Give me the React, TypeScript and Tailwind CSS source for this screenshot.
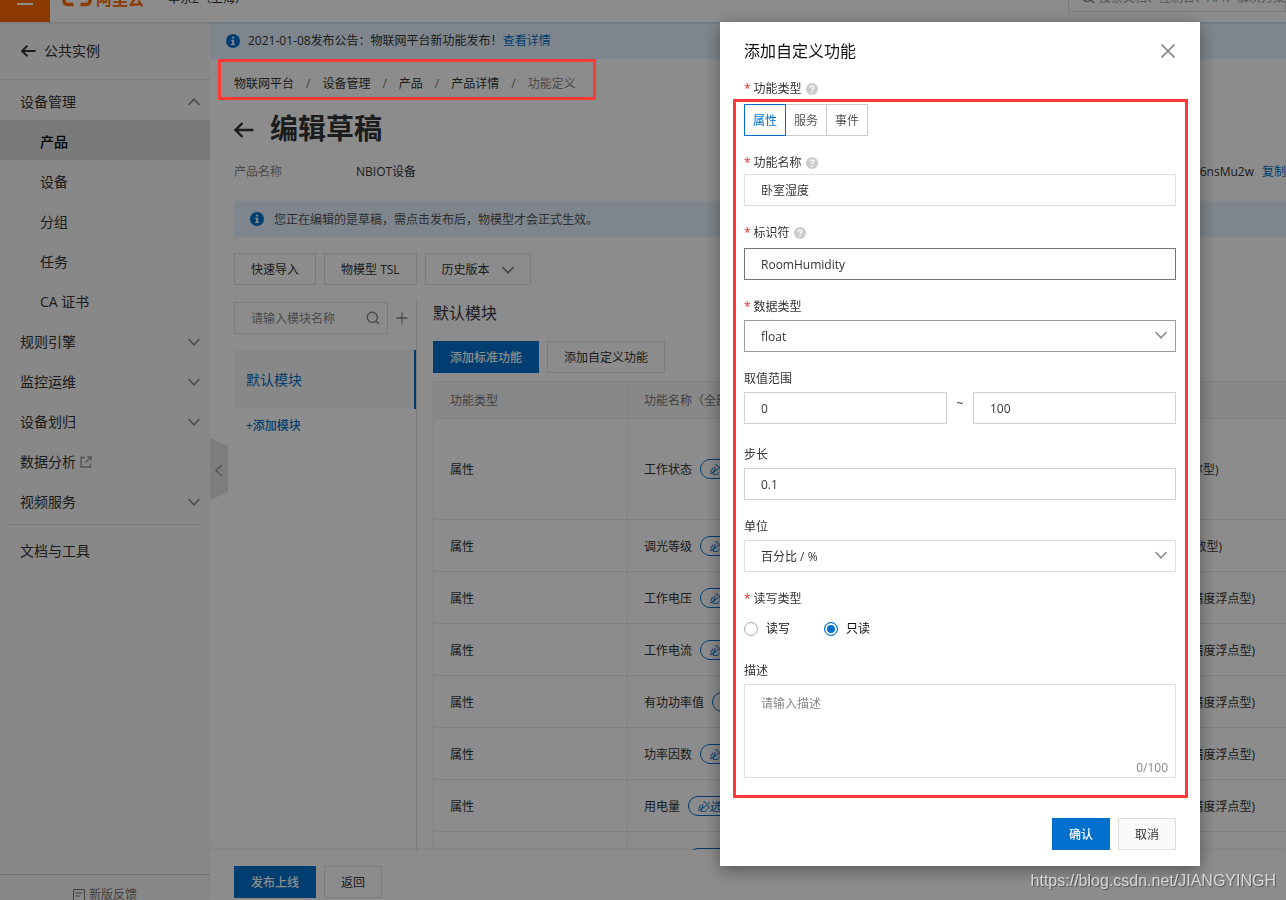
import React, { useState } from 'react';
import clsx from 'clsx';

type IconProps = { className?: string };

const ChevronIcon = ({ className }: IconProps) => (
  <svg viewBox="0 0 12 12" className={clsx('h-3 w-3', className)} fill="none" stroke="currentColor" strokeWidth="1.5">
    <path d="M0.5 3 L6 8.8 L11.5 3" />
  </svg>
);

const ArrowLeftIcon = ({ className }: IconProps) => (
  <svg viewBox="0 0 20 16" className={className} fill="none" stroke="currentColor" strokeWidth="2.4">
    <path d="M19.5 8 H1.5 M8.5 1 L1.5 8 L8.5 15" />
  </svg>
);

const InfoIcon = () => (
  <svg viewBox="0 0 14 14" className="h-[14px] w-[14px] shrink-0">
    <circle cx="7" cy="7" r="7" fill="#0070cc" />
    <path d="M6.1 2.8h2v1.8h-2z M5.2 5.8h2.9v4.1h0.9v1.1H5.1V9.9h1.1V6.9h-1z" fill="#fff" />
  </svg>
);

const HelpIcon = () => (
  <svg viewBox="0 0 12 12" className="ml-1 h-3 w-3">
    <circle cx="6" cy="6" r="6" fill="#ccc" />
    <path d="M4.2 4.7 C4.2 2.3 7.8 2.4 7.8 4.6 C7.8 5.9 6 5.8 6 7.3" fill="none" stroke="#fff" strokeWidth="1.3" />
    <circle cx="6" cy="9.1" r="0.8" fill="#fff" />
  </svg>
);

const SearchIcon = ({ className }: IconProps) => (
  <svg viewBox="0 0 14 14" className={clsx('h-[14px] w-[14px]', className)} fill="none" stroke="currentColor" strokeWidth="1.4">
    <circle cx="6.3" cy="6.3" r="5.1" />
    <path d="M10 10 L13 13" />
  </svg>
);

const ExternalIcon = () => (
  <svg viewBox="0 0 12 12" className="ml-1 h-3 w-3 text-[#999]" fill="none" stroke="currentColor" strokeWidth="1.3">
    <path d="M5 1.5H1v9.5h9.5V7.5 M7.3 1h3.7v3.7 M11 1L5.5 6.5" />
  </svg>
);

interface MenuItem {
  label: string;
  child?: boolean;
  active?: boolean;
  icon?: 'up' | 'down' | 'external';
}

const MENU: MenuItem[] = [
  { label: '设备管理', icon: 'up' },
  { label: '产品', child: true, active: true },
  { label: '设备', child: true },
  { label: '分组', child: true },
  { label: '任务', child: true },
  { label: 'CA 证书', child: true },
  { label: '规则引擎', icon: 'down' },
  { label: '监控运维', icon: 'down' },
  { label: '设备划归', icon: 'down' },
  { label: '数据分析', icon: 'external' },
  { label: '视频服务', icon: 'down' },
];

const CRUMBS = ['物联网平台', '设备管理', '产品', '产品详情'];

const ROWS = [
  { name: '工作状态', type: 'bool (布尔型)', tall: true },
  { name: '调光等级', type: 'int32 (整数型)' },
  { name: '工作电压', type: 'float (单精度浮点型)' },
  { name: '工作电流', type: 'float (单精度浮点型)' },
  { name: '有功功率值', type: 'float (单精度浮点型)' },
  { name: '功率因数', type: 'float (单精度浮点型)' },
  { name: '用电量', type: 'float (单精度浮点型)' },
  { name: '电流量', type: 'float (单精度浮点型)' },
];

const FEATURE_TYPES = ['属性', '服务', '事件'];

interface ButtonProps {
  primary?: boolean;
  className?: string;
  children: React.ReactNode;
}

const Button: React.FC<ButtonProps> = ({ primary, className, children }) => (
  <button
    type="button"
    className={clsx(
      'flex h-8 items-center border px-4 pt-0.5 text-xs leading-4 whitespace-nowrap',
      primary ? 'border-[#0070cc] bg-[#0070cc] font-medium text-white' : 'border-[#dedede] text-[#333]',
      className
    )}
  >
    {children}
  </button>
);

const TopBar = () => (
  <header className="z-10 flex h-[22px] shrink-0 items-end overflow-hidden bg-white shadow-[0_1px_2px_rgba(0,0,0,0.15)]">
    <div className="flex h-[50px] w-full shrink-0 items-center">
      <button type="button" aria-label="菜单" className="flex h-full w-[50px] shrink-0 items-center justify-center bg-[#ff6a00]">
        <svg viewBox="0 0 16 16" className="h-4 w-4" stroke="#fff" strokeWidth="2">
          <path d="M0 3h16 M0 9h16 M0 15h16" />
        </svg>
      </button>
      <a href="#" className="ml-3 flex items-center text-base leading-5 font-bold text-[#ff6a00]">
        <svg viewBox="0 0 30 20" className="mr-1 h-5 w-[30px]" fill="none" stroke="#ff6a00" strokeWidth="3.4">
          <path d="M11.5 2.5H6Q2 2.5 2 6.5V13.5Q2 17.5 6 17.5H11.5 M18.5 2.5H24Q28 2.5 28 6.5V13.5Q28 17.5 24 17.5H18.5" />
        </svg>
        <span className="pt-1">阿里云</span>
      </a>
      <span className="ml-6 pt-1 text-xs leading-4 whitespace-nowrap text-[#333]">华东2（上海）</span>
      <label className="mt-2 ml-auto flex h-8 w-[218px] items-center self-start border border-[#dedede] pt-0.5 pl-3 text-[#888]">
        <SearchIcon className="shrink-0" />
        <input
          aria-label="搜索"
          placeholder="搜索文档、控制台、API、解决方案和资源"
          className="ml-1 h-full w-full bg-transparent text-xs outline-none placeholder:text-[#999]"
        />
      </label>
    </div>
  </header>
);

const Sidebar = () => (
  <aside className="flex w-[210px] shrink-0 flex-col bg-[#f7f7f7] text-sm text-[#333]">
    <a href="#" className="flex h-[58px] shrink-0 items-center border-b border-[#dedede] pl-[21px]">
      <ArrowLeftIcon className="mr-2 h-3 w-[15px]" />
      公共实例
    </a>
    <nav>
      {MENU.map((item) => (
        <a
          key={item.label}
          href="#"
          className={clsx(
            'flex h-10 items-center pt-1 pr-[10px]',
            item.child ? 'pl-10' : 'pl-5',
            item.active && 'bg-[#dedede] font-medium text-black'
          )}
        >
          {item.label}
          {item.icon === 'external' && <ExternalIcon />}
          {item.icon === 'up' && <ChevronIcon className="ml-auto rotate-180 text-[#888]" />}
          {item.icon === 'down' && <ChevronIcon className="ml-auto text-[#888]" />}
        </a>
      ))}
      <div className="mt-1 mr-[10px] ml-2 border-t border-[#dedede]"></div>
      <a href="#" className="mt-1 flex h-10 items-center pt-1 pl-5">
        文档与工具
      </a>
    </nav>
    <a href="#" className="mt-auto flex h-[26px] shrink-0 justify-center overflow-hidden border-t border-[#d5d5d5] pt-[10px] text-xs leading-5 text-[#777]">
      <svg viewBox="0 0 12 12" className="mt-1 mr-1 h-3 w-3 shrink-0" fill="none" stroke="currentColor">
        <path d="M0.5 0.5h11v11h-11z M2.5 4h7 M2.5 7h5" />
      </svg>
      新版反馈
    </a>
  </aside>
);

const ModulePanel = () => (
  <div className="flex w-[183px] shrink-0 flex-col border-r border-[#dedede] pt-px">
    <div className="flex items-center">
      <label className="flex h-8 w-[154px] items-center border border-[#dedede] pr-[7px] pl-4">
        <input
          aria-label="模块名称"
          placeholder="请输入模块名称"
          className="h-full w-full min-w-0 bg-transparent text-xs outline-none placeholder:text-[#888]"
        />
        <SearchIcon className="shrink-0 text-[#888]" />
      </label>
      <button type="button" aria-label="添加" className="ml-2 text-[#888]">
        <svg viewBox="0 0 12 12" className="h-3 w-3" stroke="currentColor" strokeWidth="1.3">
          <path d="M6 0.5v11 M0.5 6h11" />
        </svg>
      </button>
    </div>
    <a href="#" className="mt-4 flex h-[59px] items-center border-r-2 border-[#0070cc] bg-[#f7f7f7] pl-3 text-sm text-[#0070cc]">
      默认模块
    </a>
    <button type="button" className="mt-[9px] self-start pl-3 text-xs leading-4 font-medium text-[#0070cc]">
      +添加模块
    </button>
  </div>
);

const FeatureTable = () => (
  <table className="mt-2 w-full table-fixed border-collapse text-left text-xs leading-4">
    <colgroup>
      <col className="w-[194px]" />
      <col />
      <col className="w-[155px]" />
    </colgroup>
    <thead>
      <tr className="h-[37px] bg-[#f7f7f7] text-[#777]">
        <th className="border border-[#ebebeb] px-4 pt-0.5 font-normal">功能类型</th>
        <th className="border border-[#ebebeb] px-4 pt-0.5 font-normal">功能名称（全部）</th>
        <th className="border-y border-[#ebebeb] px-4 pt-0.5 font-normal">数据类型</th>
      </tr>
    </thead>
    <tbody>
      {ROWS.map((row) => (
        <tr key={row.name} className={clsx('text-[#333]', row.tall ? 'h-[101px]' : 'h-[52px]')}>
          <td className="border border-[#ebebeb] px-4 pt-0.5">属性</td>
          <td className="border border-[#ebebeb] px-4">
            <div className="flex items-center gap-2">
              <span className="pt-0.5">{row.name}</span>
              <span className="flex h-5 items-center rounded-full border border-[#0070cc] px-2 pt-0.5 text-[#0070cc] italic">必选</span>
            </div>
          </td>
          <td className="border-y border-[#ebebeb] px-4 pt-0.5 whitespace-nowrap">{row.type}</td>
        </tr>
      ))}
    </tbody>
  </table>
);

const Workspace = () => (
  <main className="flex min-w-0 flex-1 flex-col bg-white text-xs leading-4 text-[#333]">
    <div className="flex min-h-0 flex-1 flex-col overflow-hidden">
      <div className="flex h-[37px] shrink-0 items-center bg-[#e5f3ff] pl-4">
        <InfoIcon />
        <span className="ml-2">2021-01-08发布公告：物联网平台新功能发布！</span>
        <a href="#" className="text-[#0070cc]">查看详情</a>
      </div>

      <div className="flex min-h-0 flex-1 flex-col pl-6">
        <nav className="relative mt-[17px] flex shrink-0 gap-3 self-start">
          {CRUMBS.map((crumb) => (
            <React.Fragment key={crumb}>
              <a href="#">{crumb}</a>
              <span className="text-[#777]">/</span>
            </React.Fragment>
          ))}
          <span className="text-[#888]">功能定义</span>
          <div className="absolute -top-[17px] -right-5 -bottom-2 -left-4 z-50 border-3 border-[#ff3838]"></div>
        </nav>

        <div className="mt-[14px] flex h-11 shrink-0 items-center">
          <a href="#" aria-label="返回" className="pt-1">
            <ArrowLeftIcon className="h-4 w-5" />
          </a>
          <h1 className="ml-4 text-[28px] leading-9 font-bold">编辑草稿</h1>
        </div>

        <div className="mt-[14px] flex shrink-0 items-center">
          <span className="w-[122px] text-[#888]">产品名称</span>
          <span>NBIOT设备</span>
          <span className="mr-2 ml-auto">W6nsMu2w</span>
          <a href="#" className="text-[#0070cc]">复制</a>
        </div>

        <div className="mt-[21px] flex h-9 shrink-0 items-center bg-[#e5f3ff] pl-4 text-[#555]">
          <InfoIcon />
          <span className="ml-[10px] pt-0.5">您正在编辑的是草稿，需点击发布后，物模型才会正式生效。</span>
        </div>

        <div className="mt-4 flex shrink-0 gap-2">
          <Button>快速导入</Button>
          <Button>物模型 TSL</Button>
          <Button>
            历史版本
            <ChevronIcon className="ml-3 text-[#777]" />
          </Button>
        </div>

        <div className="mt-4 flex min-h-0 flex-1">
          <ModulePanel />
          <section className="min-w-0 flex-1 overflow-hidden pl-4">
            <h2 className="text-base leading-6">默认模块</h2>
            <div className="mt-4 flex gap-2">
              <Button primary>添加标准功能</Button>
              <Button>添加自定义功能</Button>
            </div>
            <FeatureTable />
          </section>
        </div>
      </div>
    </div>

    <footer className="flex h-[50px] shrink-0 items-start gap-2 pt-4 pl-6 shadow-[0_-1px_3px_rgba(0,0,0,0.08)]">
      <Button primary>发布上线</Button>
      <Button>返回</Button>
    </footer>
  </main>
);

interface FieldProps {
  label: string;
  htmlFor?: string;
  required?: boolean;
  help?: boolean;
  className?: string;
  children: React.ReactNode;
}

const Field: React.FC<FieldProps> = ({ label, htmlFor, required, help, className, children }) => (
  <div className={clsx('flex flex-col', className ?? 'gap-1')}>
    <label htmlFor={htmlFor} className="flex h-[18px] items-center leading-[18px]">
      {required && <span className="mr-[3px] text-[#d93026]">*</span>}
      {label}
      {help && <HelpIcon />}
    </label>
    {children}
  </div>
);

const inputClass = 'h-8 w-full border bg-white px-4 text-xs text-[#333] outline-none';

const SelectBox = ({ id, value, className }: { id: string; value: string; className: string }) => (
  <div className="relative">
    <select id={id} className={clsx(inputClass, 'appearance-none pt-0.5', className)}>
      <option>{value}</option>
    </select>
    <ChevronIcon className="pointer-events-none absolute top-[9px] right-[9px] text-[#888]" />
  </div>
);

const FeatureDialog = () => {
  const [featureType, setFeatureType] = useState('属性');
  const [access, setAccess] = useState('只读');
  const [desc, setDesc] = useState('');

  return (
    <div role="dialog" aria-label="添加自定义功能" className="w-[480px] bg-white px-6 pb-4 text-xs leading-4 text-[#333] shadow-[0_4px_16px_rgba(0,0,0,0.4)]">
      <div className="flex h-[58px] items-center justify-between">
        <h2 className="text-base leading-6 text-[#111]">添加自定义功能</h2>
        <button type="button" aria-label="关闭" className="mr-px text-[#888]">
          <svg viewBox="0 0 14 14" className="h-[14px] w-[14px]" stroke="currentColor" strokeWidth="1.7">
            <path d="M0.5 0.5 L13.5 13.5 M13.5 0.5 L0.5 13.5" />
          </svg>
        </button>
      </div>

      <form className="relative flex flex-col gap-[18px]">
        <Field label="功能类型" required help className="gap-[6px]">
          <div className="flex">
            {FEATURE_TYPES.map((type) => (
              <button
                key={type}
                type="button"
                onClick={() => setFeatureType(type)}
                className={clsx(
                  'relative -mr-px h-8 w-[42px] border pt-0.5',
                  featureType === type ? 'z-10 border-[#0070cc] text-[#0070cc]' : 'border-[#ccc] text-[#555]'
                )}
              >
                {type}
              </button>
            ))}
          </div>
        </Field>
        <Field label="功能名称" htmlFor="name" required help className="gap-0.5">
          <input id="name" defaultValue="卧室湿度" className={clsx(inputClass, 'border-[#dedede]')} />
        </Field>
        <Field label="标识符" htmlFor="identifier" required help className="gap-[6px]">
          <input id="identifier" defaultValue="RoomHumidity" className={clsx(inputClass, 'border-[#737373]')} />
        </Field>
        <Field label="数据类型" htmlFor="dataType" required>
          <SelectBox id="dataType" value="float" className="border-[#999]" />
        </Field>
        <Field label="取值范围" htmlFor="min" className="gap-1 pb-1">
          <div className="flex">
            <input id="min" defaultValue="0" className={clsx(inputClass, 'border-[#d0d0d0]')} />
            <span className="w-[26px] shrink-0 pt-1 text-center">~</span>
            <input aria-label="最大值" defaultValue="100" className={clsx(inputClass, 'border-[#d0d0d0]')} />
          </div>
        </Field>
        <Field label="步长" htmlFor="step">
          <input id="step" defaultValue="0.1" className={clsx(inputClass, 'border-[#d0d0d0]')} />
        </Field>
        <Field label="单位" htmlFor="unit">
          <SelectBox id="unit" value="百分比 / %" className="border-[#dedede]" />
        </Field>
        <Field label="读写类型" required>
          <div className="flex h-8 items-center gap-[34px] pt-0.5 text-[#111]">
            {['读写', '只读'].map((mode) => (
              <label key={mode} className="flex items-center gap-2">
                <input
                  type="radio"
                  name="access"
                  checked={access === mode}
                  onChange={() => setAccess(mode)}
                  className="h-[14px] w-[14px] appearance-none rounded-full border border-[#aaa] bg-white checked:border-[#0070cc] checked:bg-[#0070cc] checked:shadow-[inset_0_0_0_2px_#fff]"
                />
                {mode}
              </label>
            ))}
          </div>
        </Field>
        <Field label="描述" htmlFor="desc">
          <div className="relative flex">
            <textarea
              id="desc"
              value={desc}
              onChange={(e) => setDesc(e.target.value)}
              placeholder="请输入描述"
              className="h-[94px] w-full resize-none border border-[#dedede] px-4 py-[11px] outline-none placeholder:text-[#888]"
            />
            <span className="absolute right-2 bottom-[2px] text-[#888]">{desc.length}/100</span>
          </div>
        </Field>
        <div className="pointer-events-none absolute top-[19px] -right-3 -bottom-5 -left-[11px] border-3 border-[#ff3838]"></div>
      </form>

      <div className="mt-10 flex justify-end gap-2">
        <Button primary>确认</Button>
        <Button className="bg-[#fafafa]">取消</Button>
      </div>
    </div>
  );
};

const App: React.FC = () => {
  return (
    <div className="flex h-screen flex-col overflow-hidden bg-white font-['Open_Sans','Noto_Sans_CJK_SC',sans-serif]">
      <TopBar />
      <div className="flex min-h-0 flex-1">
        <Sidebar />
        <div className="relative flex min-w-0 flex-1">
          <Workspace />
          {/* Sidebar collapse handle */}
          <button type="button" aria-label="收起" className="absolute top-[416px] left-0">
            <svg viewBox="0 0 18 62" className="h-[62px] w-[18px]">
              <path d="M0 0 L18 8 V54 L0 62 Z" fill="#e4e4e4" />
              <path d="M12 27 L6 32.5 L12 38" fill="none" stroke="#999" strokeWidth="1.3" />
            </svg>
          </button>
        </div>
      </div>

      {/* Mask */}
      <div className="fixed inset-0 z-40 flex items-start justify-end bg-black/45 pt-[22px] pr-[86px]">
        <FeatureDialog />
      </div>

      <div className="fixed right-[10px] bottom-[7px] z-50 font-['Liberation_Sans',sans-serif] text-base leading-6 text-white/70 [text-shadow:1px_1px_1px_rgba(0,0,0,0.4)]">
        https://blog.csdn.net/JIANGYINGH
      </div>
    </div>
  );
};

export default App;
